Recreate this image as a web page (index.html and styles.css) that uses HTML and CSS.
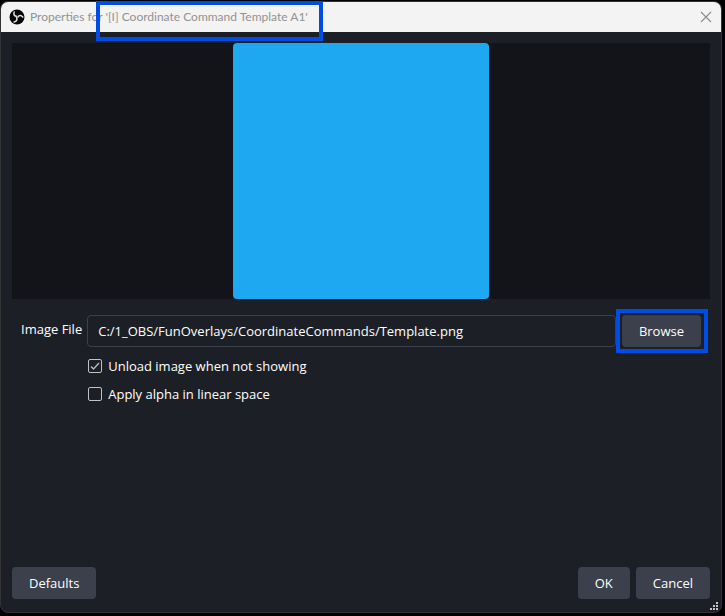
FILE: index.html
```html
<!DOCTYPE html>
<html lang="en">
<head>
<meta charset="utf-8">
<title>Properties for '[I] Coordinate Command Template A1'</title>
<link rel="stylesheet" href="styles.css">
</head>
<body>
<main class="window">
  <header class="titlebar">
    <svg class="logo" viewBox="0 0 16 16" aria-hidden="true">
      <circle cx="8" cy="8" r="7.5" fill="#050505"/>
      <g fill="none" stroke="#e4e4e4" stroke-width="1.5" stroke-linecap="round">
        <path d="M5.2 3C4.2 5.4 5.4 7.2 7.6 7.2"/>
        <path d="M5.2 3C4.2 5.4 5.4 7.2 7.6 7.2" transform="rotate(120 8 8)"/>
        <path d="M5.2 3C4.2 5.4 5.4 7.2 7.6 7.2" transform="rotate(240 8 8)"/>
      </g>
    </svg>
    <h1 class="title">Properties for <span class="marked marked-title">'[I] Coordinate Command Template A1'</span></h1>
    <button class="close" type="button" aria-label="Close">
      <svg viewBox="0 0 12 12" aria-hidden="true"><path d="M1 1L11 11M11 1L1 11" stroke="#8a8a8a" stroke-width="1.1"/></svg>
    </button>
  </header>
  <form class="content">
    <div class="preview"><div class="image"></div></div>
    <div class="fields">
      <label class="label" for="file">Image File</label>
      <div class="file-row">
        <input class="path" id="file" type="text" value="C:/1_OBS/FunOverlays/CoordinateCommands/Template.png" readonly>
        <div class="marked marked-browse"><button class="button" type="button">Browse</button></div>
      </div>
      <label class="option"><input type="checkbox" checked>Unload image when not showing</label>
      <label class="option"><input type="checkbox">Apply alpha in linear space</label>
    </div>
    <footer class="actions">
      <button class="button defaults" type="button">Defaults</button>
      <button class="button" type="button">OK</button>
      <button class="button" type="button">Cancel</button>
    </footer>
  </form>
  <svg class="grip" viewBox="0 0 8 8" aria-hidden="true">
    <path fill="#c4c4c4" d="M6 0h2v2h-2zM3 3h2v2h-2zM6 3h2v2h-2zM0 6h2v2h-2zM3 6h2v2h-2zM6 6h2v2h-2z"/>
  </svg>
</main>
</body>
</html>
```
FILE: styles.css
```css
* {
  box-sizing: border-box;
}

body {
  margin: 0;
  padding: 1px 3px 3px 0;
  min-height: 100vh;
  display: flex;
  background: #000;
  color: #fff;
  font: 13px/18px "Open Sans", "Noto Sans", sans-serif;
}

button,
input {
  font: inherit;
  color: inherit;
}

.window {
  position: relative;
  flex: 1;
  display: flex;
  flex-direction: column;
  border: 1px solid #333336;
  border-radius: 8px;
  background: #1d1f26;
}

.titlebar {
  display: flex;
  align-items: center;
  gap: 5px;
  height: 30px;
  padding: 0 9px 0 8px;
  border-radius: 7px 7px 0 0;
  background: #f3f3f3;
  color: #929292;
}

.logo {
  width: 16px;
  height: 16px;
}

.title {
  flex: 1;
  margin: 0;
  font-family: Lato, "Open Sans", sans-serif;
  font-size: 12px;
  font-weight: 400;
  line-height: 16px;
  white-space: nowrap;
}

.close {
  display: flex;
  padding: 0;
  border: 0;
  background: none;
}

.close svg {
  width: 12px;
  height: 12px;
}

.marked {
  position: relative;
}

.marked::after {
  content: "";
  position: absolute;
  border: 4px solid #004de6;
  pointer-events: none;
}

.marked-title::after {
  inset: -8px -15px -17px -9px;
}

.marked-browse::after {
  inset: -6px -7px -6px -6px;
}

.content {
  flex: 1;
  display: flex;
  flex-direction: column;
  padding: 11px 11px 13px;
}

.preview {
  display: flex;
  justify-content: center;
  background: #131419;
}

.image {
  width: 256px;
  height: 256px;
  border-radius: 4px;
  background: #1ea8f2;
}

.fields {
  display: grid;
  grid-template-columns: auto 1fr;
  column-gap: 5px;
  padding: 16px 9px 0;
}

.label {
  padding-top: 5px;
}

.file-row {
  display: flex;
  gap: 6px;
  margin-bottom: 5px;
}

.path {
  flex: 1;
  min-width: 0;
  height: 32px;
  padding: 0 10px;
  border: 1px solid #3c404d;
  border-radius: 4px;
  outline: 0;
  background: transparent;
}

.option {
  grid-column: 2;
  display: flex;
  align-items: center;
  gap: 6px;
  height: 28px;
  padding-left: 1px;
}

.option input {
  appearance: none;
  width: 14px;
  height: 14px;
  margin: 0;
  border: 1px solid #c2c2c4;
  border-radius: 2px;
}

.option input:checked {
  background: url("data:image/svg+xml,%3Csvg xmlns='http://www.w3.org/2000/svg' viewBox='0 0 12 12'%3E%3Cpath d='M2 6.5L4.5 9L10 3' fill='none' stroke='%23b4b4b6' stroke-width='1.5'/%3E%3C/svg%3E") center / 12px 12px no-repeat;
}

.button {
  height: 32px;
  padding: 0 17px;
  border: 0;
  border-radius: 4px;
  background: #3c404d;
}

.actions {
  display: flex;
  gap: 6px;
  margin-top: auto;
}

.defaults {
  margin-right: auto;
}

.grip {
  position: absolute;
  right: 3px;
  bottom: 2px;
  width: 8px;
  height: 8px;
}
```
